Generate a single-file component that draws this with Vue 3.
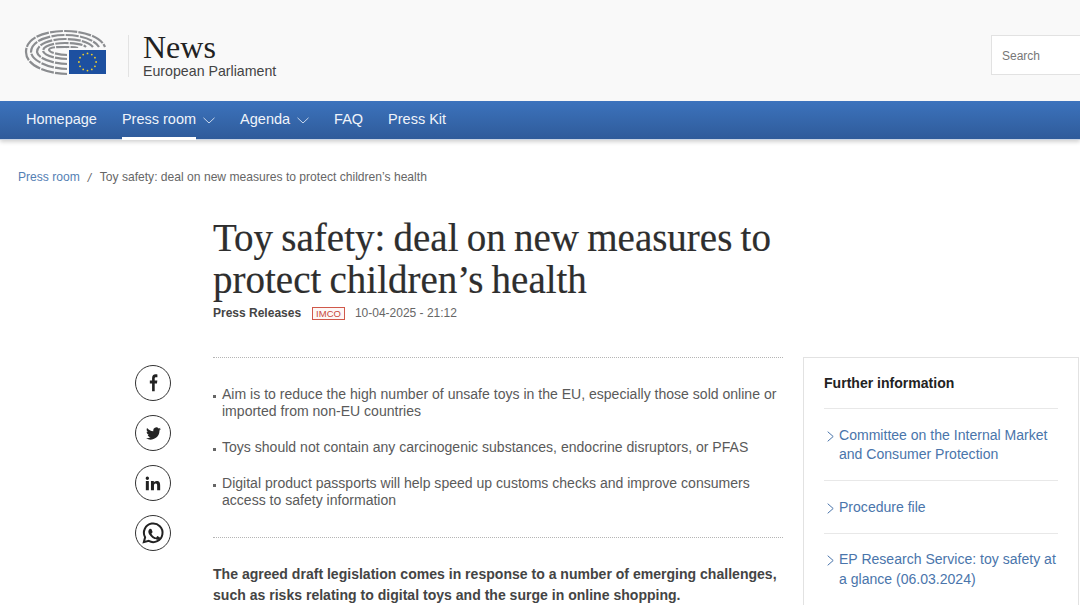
<script setup>
const nav = [
  { label: 'Homepage' },
  { label: 'Press room', caret: true, active: true },
  { label: 'Agenda', caret: true },
  { label: 'FAQ' },
  { label: 'Press Kit' }
]
const stars = Array.from({ length: 12 }, (_, i) => {
  const a = (i * Math.PI) / 6
  return { x: 88 + 8.6 * Math.cos(a), y: 62 + 8.6 * Math.sin(a) }
})
const bullets = [
  'Aim is to reduce the high number of unsafe toys in the EU, especially those sold online or imported from non-EU countries',
  'Toys should not contain any carcinogenic substances, endocrine disruptors, or PFAS',
  'Digital product passports will help speed up customs checks and improve consumers access to safety information'
]
const links = [
  'Committee on the Internal Market and Consumer Protection',
  'Procedure file',
  'EP Research Service: toy safety at a glance (06.03.2024)'
]
const arcs = [
  'M68 74 C48 74 26 66 26 52 C26 38 44 31 65 31 C84 31 101 37 105 47',
  'M68 69 C52 69 32 62 31 52 C31 41 48 35 65 35 C81 35 95 40 99 47',
  'M68 64 C55 64 38 59 37 52 C37 44 50 39 65 39 C78 39 89 42 93 47',
  'M68 59 C58 59 44 56 43 51 C43 46 53 43 65 43 C74 43 83 44 86 47',
  'M68 55 C60 55 50 53 49 50 C49 47 57 47 65 47 C70 47 75 47 78 48'
]
</script>

<template>
  <div class="page">
    <header class="top">
      <svg class="logo" width="84" height="52" viewBox="24 28 84 52" aria-hidden="true">
        <path v-for="d in arcs" :key="d" :d="d" fill="none" stroke="#8b8d90" stroke-width="2.2" stroke-dasharray="13 1.2" />
        <rect x="67" y="48" width="40" height="28" fill="#f9f9f9" />
        <rect x="69" y="50" width="37" height="24" fill="#1d50a0" />
        <circle v-for="(s, i) in stars" :key="i" :cx="s.x - 0.5" :cy="s.y" r="0.9" fill="#f1d02a" />
      </svg>
      <div class="divider"></div>
      <div class="brand">
        <div class="brand-title">News</div>
        <div class="brand-sub">European Parliament</div>
      </div>
      <div class="search">Search</div>
    </header>

    <nav class="nav">
      <a v-for="item in nav" :key="item.label" class="nav-item">
        <span class="nav-label" :class="{ active: item.active }">{{ item.label }}</span>
        <svg v-if="item.caret" class="caret" width="12" height="7" viewBox="0 0 12 7" aria-hidden="true">
          <path d="M0.5 0.8 L6 6 L11.5 0.8" fill="none" stroke="#c9d8ec" stroke-width="1" />
        </svg>
      </a>
    </nav>

    <div class="crumbs">
      <a class="crumb-link">Press room</a>
      <span class="crumb-sep">/</span>
      <span>Toy safety: deal on new measures to protect children’s health</span>
    </div>

    <section class="head">
      <h1>Toy safety: deal on new measures to protect children’s health</h1>
      <div class="meta">
        <strong>Press Releases</strong>
        <span class="tag">IMCO</span>
        <span>10-04-2025 - 21:12</span>
      </div>
    </section>

    <div class="body">
      <div class="share">
        <a class="circle">
          <svg width="9" height="18" viewBox="6 2 12 21" preserveAspectRatio="none" aria-hidden="true">
            <path fill="#222" d="M13.6 22v-9h3l.5-3.500h-3.500V7.400c0-1 .3-1.700 1.800-1.700h1.800V2.500c-.4 0-1.400-.1-2.600-.1-2.700 0-4.500 1.600-4.500 4.600v2.500H7.100V13h3V22z" />
          </svg>
        </a>
        <a class="circle">
          <svg width="15" height="15" viewBox="0 0 24 24" aria-hidden="true">
            <path fill="#222" d="M23.900 4.600c-.9.400-1.800.7-2.800.8 1-.6 1.800-1.600 2.200-2.700-1 .6-2 1-3.100 1.200A4.900 4.900 0 0 0 11.800 8.400C7.700 8.200 4.100 6.200 1.700 3.200c-1.300 2.300-.6 5.200 1.500 6.600-.8 0-1.500-.2-2.200-.6 0 2.300 1.600 4.400 3.900 4.900-.7.200-1.500.2-2.200.1.600 2 2.400 3.400 4.600 3.400A9.900 9.900 0 0 1 0 19.500 14 14 0 0 0 21.500 7c1-.7 1.800-1.500 2.400-2.400z" />
          </svg>
        </a>
        <a class="circle">
          <svg width="16" height="15" viewBox="1 1 22 22" aria-hidden="true">
            <path fill="#222" d="M1.500 8.500h4.400V22H1.500zM3.700 1.800a2.500 2.500 0 1 1 0 5 2.500 2.500 0 0 1 0-5zM9 8.500h4.200v1.900c.6-1.100 2-2.200 4.100-2.200 4.400 0 5.200 2.900 5.200 6.600V22h-4.400v-6.400c0-1.600 0-3.500-2.200-3.500s-2.500 1.700-2.500 3.400V22H9z" />
          </svg>
        </a>
        <a class="circle">
          <svg width="24" height="24" viewBox="0 0 24 24" aria-hidden="true">
            <path fill="none" stroke="#222" stroke-width="2" d="M2.800 21.200l1.300-4.900A9.300 9.300 0 1 1 7.700 19.900z" />
            <path fill="#222" d="M8.800 6.800c-.3 0-.8.100-1.200.6-.4.500-1.300 1.400-1.300 3.100 0 1.800 1.300 3.500 1.500 3.800.2.200 2.600 4 6.300 5.400 3 1.200 3.700.9 4.300.9.700-.1 2.100-.9 2.400-1.700-.1 0-.1-.1 0 0l-.2-1.600-2.500-1.200c-.3-.1-.6-.2-.8.200l-1.100 1.400c-.2.200-.4.300-.8.100-.4-.2-1.600-.6-3-1.900-1.100-1-1.900-2.200-2.100-2.600-.2-.4 0-.6.200-.8l.6-.7c.2-.2.200-.4.400-.6.100-.3.100-.5 0-.7l-1.100-2.700c-.3-.7-.6-.7-.8-.7z" transform="translate(2.300 2.300) scale(.8)" />
          </svg>
        </a>
      </div>

      <article class="article">
        <ul class="bullets">
          <li v-for="b in bullets" :key="b">{{ b }}</li>
        </ul>
        <p class="lead">The agreed draft legislation comes in response to a number of emerging challenges, such as risks relating to digital toys and the surge in online shopping.</p>
      </article>

      <aside class="aside">
        <div class="aside-title">Further information</div>
        <a v-for="l in links" :key="l" class="aside-link">
          <svg class="chev" width="7" height="11" viewBox="0 0 7 11" aria-hidden="true">
            <path d="M0.7 0.700 L6.200 5.500 L0.700 10.300" fill="none" stroke="#4a75ab" stroke-width="1" />
          </svg>
          <span>{{ l }}</span>
        </a>
      </aside>
    </div>
  </div>
</template>

<style>
html, body { margin: 0; background: #fff; overflow: hidden; }
</style>

<style scoped>
.page {
  width: 1080px;
  height: 605px;
  overflow: hidden;
  font-family: "Liberation Sans", Arial, sans-serif;
  color: #444;
  background: #fff;
}
.top {
  height: 101px;
  box-sizing: border-box;
  background: #f9f9f9;
  display: flex;
  align-items: center;
  padding: 10px 0 0 24px;
}
.logo { flex: none; align-self: flex-start; margin-top: 18px; }
.divider {
  width: 1px;
  height: 42px;
  background: #e3e3e3;
  margin: 0 14px 0 20px;
}
.brand-title {
  font-family: "Liberation Serif", serif;
  font-size: 32px;
  line-height: 30px;
  color: #222;
}
.brand-sub { font-size: 14.200px; line-height: 18px; color: #444; }
.search {
  margin-left: auto;
  align-self: flex-start;
  margin-top: 25px;
  width: 89px;
  height: 40px;
  box-sizing: border-box;
  border: 1px solid #e2e2e2;
  border-right: 0;
  background: #fff;
  padding-left: 10px;
  font-size: 12px;
  line-height: 41px;
  color: #777;
}
.nav {
  height: 38px;
  display: flex;
  gap: 25px;
  padding-left: 26px;
  background: linear-gradient(#3c73bd, #2f5b9a);
  box-shadow: 0 1px 0 #c9d4e3, 0 3px 4px rgba(0, 0, 0, 0.18);
  position: relative;
}
.nav-item {
  color: #f0f4fa;
  font-size: 14.500px;
  display: flex;
  align-items: flex-start;
  gap: 7px;
  height: 38px;
}
.nav-label {
  position: relative;
  display: block;
  height: 38px;
  line-height: 37px;
}
.nav-label.active::after {
  content: "";
  position: absolute;
  left: 0;
  right: 0;
  bottom: -1px;
  height: 3px;
  background: #fff;
}
.caret { margin-top: 16px; }
.crumbs {
  padding: 30px 0 0 18px;
  font-size: 12.100px;
  line-height: 16px;
  color: #666;
  display: flex;
  align-items: baseline;
}
.crumb-link { color: #5480b4; }
.crumb-sep { margin: 0 8.500px 0 8px; font-style: italic; position: relative; top: 1px; }
.head { padding: 32px 0 0 213px; width: 590px; }
h1 {
  margin: 0;
  font-family: "Liberation Serif", serif;
  font-weight: 400;
  font-size: 39px;
  word-spacing: -1.500px;
  line-height: 42px;
  color: #2e2e2e;
  -webkit-text-stroke: 0.2px #2e2e2e;
}
.meta {
  margin-top: 4px;
  display: flex;
  align-items: center;
  font-size: 12px;
  line-height: 16px;
  color: #666;
}
.meta strong { font-weight: 700; color: #444; }
.tag {
  border: 1px solid #d0584a;
  color: #c8483a;
  font-size: 9.500px;
  line-height: 11px;
  padding: 0 3.500px;
  margin: 0 9.500px 0 10.500px;
  background: #fdf7f6;
}
.body {
  display: flex;
  padding: 36px 0 0 135px;
  align-items: flex-start;
}
.share {
  width: 78px;
  flex: none;
  display: flex;
  flex-direction: column;
  gap: 14px;
  padding-top: 8px;
}
.circle {
  width: 34px;
  height: 34px;
  border: 1.200px solid #333;
  border-radius: 50%;
  display: flex;
  align-items: center;
  justify-content: center;
  background: #fff;
}
.article { width: 570px; flex: none; }
.bullets {
  list-style: none;
  margin: 0;
  padding: 28px 0 28px 9px;
  border-top: 1px dotted #b5b5b5;
  border-bottom: 1px dotted #b5b5b5;
  font-size: 14.050px;
  line-height: 17px;
  color: #5a5a5a;
}
.bullets li { position: relative; margin-bottom: 19px; }
.bullets li:last-child { margin-bottom: 0; }
.bullets li::before {
  content: "";
  position: absolute;
  left: -9px;
  top: 9px;
  width: 3px;
  height: 3px;
  background: #666;
}
.lead {
  margin: 26px 0 0;
  font-size: 14.050px;
  line-height: 21px;
  font-weight: 700;
  color: #444;
}
.aside {
  margin-left: 20px;
  width: 276px;
  flex: none;
  box-sizing: border-box;
  border: 1px solid #e2e2e2;
  padding: 17px 20px 0;
}
.aside-title {
  font-size: 14.050px;
  line-height: 16px;
  font-weight: 700;
  color: #222;
  padding-bottom: 17px;
  border-bottom: 1px solid #e8e8e8;
}
.aside-link {
  display: flex;
  gap: 5px;
  padding: 16.500px 0 15.500px;
  border-bottom: 1px solid #e8e8e8;
  font-size: 14.050px;
  line-height: 19.500px;
  color: #4a75ab;
}
.chev { flex: none; margin: 5px 0 0 3px; }
</style>
